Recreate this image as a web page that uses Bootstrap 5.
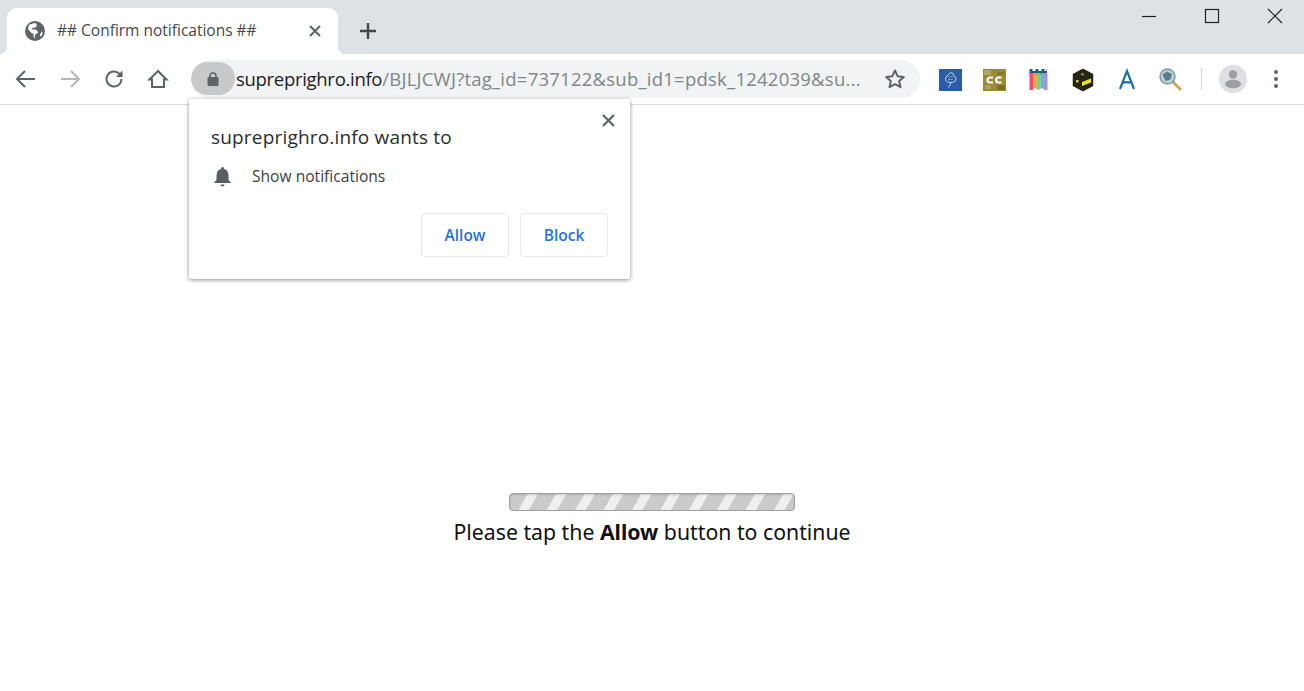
<!DOCTYPE html>
<html lang="en">
<head>
<meta charset="utf-8">
<title>## Confirm notifications ##</title>
<link href="https://cdn.jsdelivr.net/npm/bootstrap@5.3.0/dist/css/bootstrap.min.css" rel="stylesheet">
<style>
html,body{height:100%;overflow:hidden;background:#fff}
body{font-family:"Open Sans","Noto Sans",sans-serif;color:#202124}
.tabstrip{height:54px;background:#dee1e6;padding:8px 0 0 7px}
.tabitem{width:331px;height:46px;background:#fff;border-radius:10px 10px 0 0;padding:0 17px 0 18px;font-size:15.5px;color:#45484d;position:relative}
.tabitem::before,.tabitem::after{content:"";position:absolute;bottom:0;width:8px;height:8px}
.tabitem::before{left:-8px;background:radial-gradient(circle at 0 0,#dee1e6 8px,#fff 8.5px)}
.tabitem::after{right:-8px;background:radial-gradient(circle at 100% 0,#dee1e6 8px,#fff 8.5px)}
.tabtitle{margin-left:12px;white-space:nowrap}
.newtabplus{margin:14px 0 0 21px;flex:none}
.winctl{margin-left:auto;width:142px;height:32px;margin-right:21px;margin-top:-8px}
.toolbarrow{height:51px;border-bottom:1px solid #dadce0;padding-bottom:1px}
.navbtns{width:191px;padding-left:15px;gap:22px;flex:none}
.omnibox{width:729px;height:38px;background:#f1f3f4;border-radius:19px;font-size:18.5px;position:relative;overflow:hidden;flex:none}
.lockpill{width:44px;height:33px;background:#c7c9cb;border-radius:17px;flex:none}
.urlhost{color:#202124;letter-spacing:-.3px}
.urlrest{color:#80868b;letter-spacing:.24px}
.urltext{white-space:nowrap;overflow:hidden;width:640px;flex:none;margin-left:1px}
.starbtn{margin-left:auto;margin-right:14px;flex:none}
.exts{margin-left:19px;flex:none}
.extslot{width:24px;height:24px;margin-right:20px;flex:none}
.vsep{width:1px;height:22px;background:#d4d6d9;margin:0 17px 0 -2px;flex:none}
.avatarpic{flex:none}
.kebab{flex:none;margin-left:26px}
.pagearea{height:calc(100% - 105px);position:relative;padding-top:388px}
.promptbox{position:absolute;left:189px;top:-6px;width:441px;height:180px;background:#fff;border-radius:2px;box-shadow:0 1px 4px rgba(0,0,0,.45);padding:25px 22px 0;z-index:5}
.prompttitle{font-size:19px;line-height:27px;color:#2b2d30;letter-spacing:.18px}
.promptline{font-size:15.6px;margin-top:13px;height:24px;color:#3c4043}
.promptlabel{padding-top:2px}
.bellslot{width:41px;flex:none;padding-left:2px}
.promptbtns{gap:11px;margin-top:25px}
.chromebtn{width:88px;height:44px;padding:1px 0 0;background:#fff;border:1px solid #e8eaed;border-radius:4px;color:#2672d8;font-size:15.5px;font-weight:600;font-family:inherit}
.closex{position:absolute;right:15px;top:15px;line-height:0}
.stripebar{width:286px;height:18px;border:1px solid #a0a0a0;border-radius:4px;background-color:#cdcdcd;background-image:repeating-linear-gradient(120deg,#cbcbcb 0 15px,#efefef 15.5px 24px,#cbcbcb 24.6px);box-shadow:inset 0 1px 2px rgba(0,0,0,.15)}
.tapmsg{font-family:"Noto Sans","DejaVu Sans",sans-serif;font-size:21.25px;line-height:28px;color:#111;margin-top:7px}
</style>
</head>
<body>
<div class="tabstrip d-flex align-items-start">
  <div class="tabitem d-flex align-items-center">
    <svg width="20" height="20" viewBox="0 0 20 20"><circle cx="10" cy="10" r="10" fill="#5f6368"/><path d="M9 2.2 4 3.7 3 8l4 4.500 1.500 0v3l1.500 2.300-.2-3.500 3.500-3-2.500-2.700H7.700L6.500 7.200l3.500-.7L12 5l-1-2.800zM15 13.500l2-3.500.6 3-2 3z" fill="#fff"/></svg>
    <span class="tabtitle">## Confirm notifications ##</span>
    <svg class="ms-auto" width="12" height="12" viewBox="0 0 12 12"><path d="M1 1l10 10M11 1 1 11" stroke="#5f6368" stroke-width="2"/></svg>
  </div>
  <svg class="newtabplus" width="18" height="18" viewBox="0 0 18 18"><path d="M9 1v16M1 9h16" stroke="#45484d" stroke-width="2.400"/></svg>
  <div class="winctl d-flex align-items-center justify-content-between">
    <svg width="16" height="16" viewBox="0 0 16 16"><path d="M1 8.500h14" stroke="#202124" stroke-width="1.200"/></svg>
    <svg width="16" height="16" viewBox="0 0 16 16"><rect x="1.500" y="1.500" width="13" height="13" fill="none" stroke="#202124" stroke-width="1.200"/></svg>
    <svg width="16" height="16" viewBox="0 0 16 16"><path d="M1 1l14 14M15 1 1 15" stroke="#202124" stroke-width="1.200"/></svg>
  </div>
</div>
<div class="toolbarrow d-flex align-items-center">
  <div class="navbtns d-flex align-items-center">
    <svg width="22" height="20" viewBox="0 0 22 20"><path d="M20 10H3M10 2l-8 8 8 8" fill="none" stroke="#5f6368" stroke-width="2"/></svg>
    <svg width="22" height="20" viewBox="0 0 22 20"><path d="M2 10h17M12 2l8 8-8 8" fill="none" stroke="#b4b6b9" stroke-width="2"/></svg>
    <svg width="22" height="20" viewBox="0 0 22 20"><path d="M18.500 10a7.500 7.500 0 1 1-2.200-5.300L18.500 7" fill="none" stroke="#5f6368" stroke-width="2"/><path d="M19.500 1.500V8H13z" fill="#5f6368"/></svg>
    <svg width="22" height="20" viewBox="0 0 22 20"><path d="M11 2 2.500 10.500H5V18h12v-7.500h2.500z" fill="none" stroke="#5f6368" stroke-width="2"/></svg>
  </div>
  <div class="omnibox d-flex align-items-center">
    <div class="lockpill d-flex align-items-center justify-content-center">
      <svg width="12" height="14" viewBox="0 0 12 14"><path d="M3 6V4a3 3 0 0 1 6 0v2" fill="none" stroke="#5f6368" stroke-width="1.600"/><rect x="0.500" y="5" width="11" height="9" rx="1.200" fill="#5f6368"/></svg>
    </div>
    <div class="urltext"><span class="urlhost">supreprighro.info</span><span class="urlrest">/BJLJCWJ?tag_id=737122&amp;sub_id1=pdsk_1242039&amp;su...</span></div>
    <svg class="starbtn" width="22" height="22" viewBox="0 0 22 22"><path d="M11 2.500l2.600 5.700 6.200.7-4.600 4.200 1.300 6.100L11 16.200l-5.500 3 1.300-6.100-4.600-4.200 6.200-.7z" fill="none" stroke="#5f6368" stroke-width="2" stroke-linejoin="round"/></svg>
  </div>
  <div class="exts d-flex align-items-center">
    <div class="extslot"><svg width="24" height="24" viewBox="0 0 24 24"><rect y="1" width="23" height="22" fill="#2a5cab"/><path d="M11.500 4.500l2.500 1 1 2.500 2 2-.5 3-3 1.500h-2l-3-.5-2-2 .5-3 2-2zM11.500 14.500v2M11.500 16.500l-2 3" fill="none" stroke="#c3d4ec" stroke-width="1"/><path d="M9 9h5M9 11.500h5" stroke="#8aa8d6" stroke-width=".8"/></svg></div>
    <div class="extslot"><svg width="24" height="24" viewBox="0 0 24 24"><rect y="1" width="23" height="22" fill="#9a8a37"/><rect x="1" y="2" width="7" height="5" fill="#b3a55b"/><rect x="14" y="4" width="7" height="3" fill="#857828"/><rect x="14" y="17" width="8" height="5" fill="#7d7026"/><rect x="2" y="17" width="6" height="4" fill="#b0a257"/><path d="M10 9.500H7a2.500 2.500 0 0 0 0 5h3M18.500 9.500h-3a2.500 2.500 0 0 0 0 5h3" fill="none" stroke="#fff" stroke-width="2.200"/></svg></div>
    <div class="extslot"><svg width="24" height="24" viewBox="0 0 24 24"><path d="M2.500 1h3v2h3V1h3v2h3V1h3v2h2V1h.5v6H2.500z" fill="#1f5a78"/><rect x="2.500" y="5" width="3.600" height="17" fill="#ea4f7b"/><rect x="6.100" y="5" width="3.600" height="15.500" fill="#f49a3b"/><rect x="9.700" y="5" width="3.600" height="16.500" fill="#8ecb5a"/><rect x="13.300" y="5" width="3.600" height="15.500" fill="#52bfc8"/><rect x="16.900" y="5" width="3.600" height="17" fill="#a68fe0"/></svg></div>
    <div class="extslot"><svg width="24" height="24" viewBox="0 0 24 24"><path d="M12 1.500l9.500 5v11L12 22.500l-9.500-5v-11z" fill="#26241a" stroke="#26241a" stroke-linejoin="round" stroke-width="1.500"/><path d="M11 14l9-3.500v4L11 18z" fill="#e9e61e"/><rect x="10" y="5" width="3" height="2.500" fill="#7d7a20"/><rect x="5" y="12" width="2.500" height="2.500" fill="#d8d51e"/></svg></div>
    <div class="extslot"><svg width="24" height="24" viewBox="0 0 24 24"><path d="M5 21 12 3l7 18M8.500 15c3-1.500 5-1 7 0" fill="none" stroke="#1f6f9f" stroke-width="2.200"/></svg></div>
    <div class="extslot"><svg width="24" height="24" viewBox="0 0 24 24"><path d="M13 13l9 9" stroke="#c7a95c" stroke-width="3"/><circle cx="8.500" cy="8.500" r="7.500" fill="#b7d2da" stroke="#8a9aa0" stroke-width="1.500"/><path d="M3.500 6.500l4.500-3 5 2.500-1.500 5.500-5 1.500z" fill="#5d7f8c"/></svg></div>
    <div class="vsep"></div>
    <svg class="avatarpic" width="28" height="28" viewBox="0 0 28 28"><circle cx="14" cy="14" r="14" fill="#dedfe1"/><circle cx="14" cy="9.500" r="4.200" fill="#9d9fa3"/><ellipse cx="14" cy="19" rx="8" ry="4.200" fill="#9d9fa3"/></svg>
    <svg class="kebab" width="6" height="20" viewBox="0 0 6 20"><circle cx="3" cy="3" r="2" fill="#5f6368"/><circle cx="3" cy="10" r="2" fill="#5f6368"/><circle cx="3" cy="17" r="2" fill="#5f6368"/></svg>
  </div>
</div>
<div class="pagearea d-flex flex-column align-items-center">
  <div class="promptbox">
    <div class="closex"><svg width="13" height="13" viewBox="0 0 13 13"><path d="M1 1l11 11M12 1 1 12" stroke="#5f6368" stroke-width="2.200"/></svg></div>
    <div class="prompttitle">supreprighro.info wants to</div>
    <div class="promptline d-flex align-items-center">
      <div class="bellslot"><svg width="19" height="21" viewBox="0 0 19 21" class="d-block"><path d="M9.500 1a1.500 1.500 0 0 1 1.500 1.500v.6c3 .7 4.500 3.200 4.500 6.400v4.500l2 2v1H1.500v-1l2-2V9.500c0-3.200 1.500-5.700 4.500-6.400v-.6A1.500 1.500 0 0 1 9.500 1zM7.500 18.500h4a2 2 0 0 1-4 0z" fill="#5a5d66"/></svg></div>
      <span class="promptlabel">Show notifications</span>
    </div>
    <div class="promptbtns d-flex justify-content-end">
      <button type="button" class="btn chromebtn">Allow</button>
      <button type="button" class="btn chromebtn">Block</button>
    </div>
  </div>
  <div class="stripebar"></div>
  <div class="tapmsg">Please tap the <strong>Allow</strong> button to continue</div>
</div>
<script src="https://cdn.jsdelivr.net/npm/bootstrap@5.3.0/dist/js/bootstrap.bundle.min.js"></script>
</body>
</html>
